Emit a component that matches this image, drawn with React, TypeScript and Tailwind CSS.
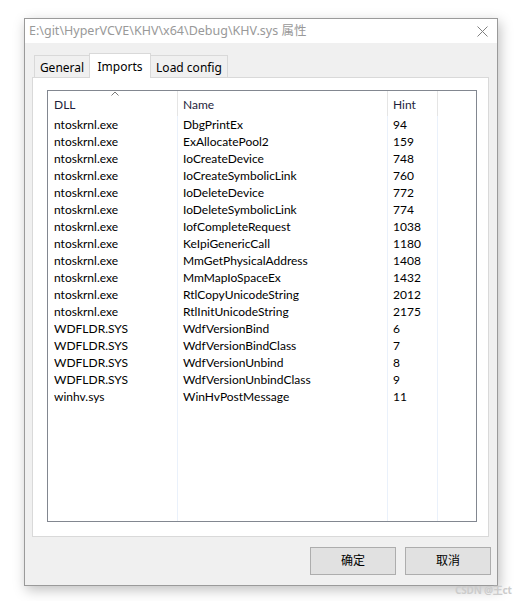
import { useState } from "react";

const ROWS: [string, string, string][] = [
  ["ntoskrnl.exe", "DbgPrintEx", "94"],
  ["ntoskrnl.exe", "ExAllocatePool2", "159"],
  ["ntoskrnl.exe", "IoCreateDevice", "748"],
  ["ntoskrnl.exe", "IoCreateSymbolicLink", "760"],
  ["ntoskrnl.exe", "IoDeleteDevice", "772"],
  ["ntoskrnl.exe", "IoDeleteSymbolicLink", "774"],
  ["ntoskrnl.exe", "IofCompleteRequest", "1038"],
  ["ntoskrnl.exe", "KeIpiGenericCall", "1180"],
  ["ntoskrnl.exe", "MmGetPhysicalAddress", "1408"],
  ["ntoskrnl.exe", "MmMapIoSpaceEx", "1432"],
  ["ntoskrnl.exe", "RtlCopyUnicodeString", "2012"],
  ["ntoskrnl.exe", "RtlInitUnicodeString", "2175"],
  ["WDFLDR.SYS", "WdfVersionBind", "6"],
  ["WDFLDR.SYS", "WdfVersionBindClass", "7"],
  ["WDFLDR.SYS", "WdfVersionUnbind", "8"],
  ["WDFLDR.SYS", "WdfVersionUnbindClass", "9"],
  ["winhv.sys", "WinHvPostMessage", "11"],
];

const TABS = [
  { label: "General", width: "w-[56px]" },
  { label: "Imports", width: "w-[62px]" },
  { label: "Load config", width: "w-[78px]" },
];

export default function App() {
  const [tab, setTab] = useState("Imports");

  return (
    <div className="relative w-[517px] h-[601px] bg-white pl-[24px] pt-[18px] text-[12px] text-black font-['Noto_Sans','Noto_Sans_CJK_SC',sans-serif]">
      {/* window */}
      <div className="w-[474px] h-[568px] border border-[#9a9a9a] bg-[#f0f0f0] flex flex-col shadow-[2px_4px_12px_rgba(0,0,0,0.25)]">
        {/* title bar */}
        <div className="h-[24px] bg-white flex items-center justify-between pl-[4px] pr-[9px] shrink-0">
          <span className="text-[#999999] text-[12.5px] leading-none">E:\git\HyperVCVE\KHV\x64\Debug\KHV.sys 属性</span>
          <svg width="11" height="11" viewBox="0 0 11 11" stroke="#808080" strokeWidth="1">
            <path d="M0.5 0.5 L10.5 10.5 M10.5 0.5 L0.5 10.5" />
          </svg>
        </div>

        {/* tabs */}
        <div className="flex items-end h-[34px] pl-[9px] shrink-0">
          {TABS.map((t) => {
            const active = t.label === tab;
            return (
              <button
                key={t.label}
                onClick={() => setTab(t.label)}
                className={
                  active
                    ? `relative z-10 ${t.width} h-[25px] -mb-px -mr-px flex justify-center items-start pt-[4px] bg-white border border-b-0 border-[#d9d9d9] text-[12px]`
                    : `${t.width} h-[22px] -mr-px flex justify-center items-start pt-[3px] bg-[#f0f0f0] border border-b-0 border-[#d9d9d9] text-[12px]`
                }
              >
                {t.label}
              </button>
            );
          })}
        </div>

        {/* tab panel */}
        <div className="ml-[7px] mr-[8px] h-[460px] bg-white border border-[#d9d9d9] pl-[14px] pr-[11px] pt-[12px] shrink-0">
          <div className="h-[432px] border border-[#828790] bg-white flex flex-col overflow-hidden font-['Lato','Noto_Sans',sans-serif]">
            {/* header */}
            <div className="flex h-[25px] shrink-0 text-[#1e1e3c]">
              <div className="relative w-[130px] border-r border-[#e5e5e5] pl-[6px] pt-[5px]">
                DLL
                <svg className="absolute left-[63px] top-[0px]" width="8" height="5" viewBox="0 0 8 5" fill="none" stroke="#7a7a7a" strokeWidth="1">
                  <path d="M0.5 4.5 L4 1 L7.5 4.5" />
                </svg>
              </div>
              <div className="w-[210px] border-r border-[#e5e5e5] pl-[5px] pt-[5px]">Name</div>
              <div className="w-[50px] border-r border-[#e5e5e5] pl-[5px] pt-[5px]">Hint</div>
            </div>
            {/* body */}
            <div className="flex flex-1">
              <div className="w-[130px] border-r border-[#eaf1fb]">
                {ROWS.map((r, i) => (
                  <div key={i} className="h-[17px] pl-[6px] leading-[17px] whitespace-nowrap">{r[0]}</div>
                ))}
              </div>
              <div className="w-[210px] border-r border-[#eaf1fb]">
                {ROWS.map((r, i) => (
                  <div key={i} className="h-[17px] pl-[5px] leading-[17px] whitespace-nowrap">{r[1]}</div>
                ))}
              </div>
              <div className="w-[50px] border-r border-[#eaf1fb]">
                {ROWS.map((r, i) => (
                  <div key={i} className="h-[17px] pl-[5px] leading-[17px]">{r[2]}</div>
                ))}
              </div>
            </div>
          </div>
        </div>

        {/* buttons */}
        <div className="flex justify-end gap-[9px] pr-[6px] pt-[10px]">
          <button className="w-[86px] h-[28px] bg-[#e1e1e1] border border-[#adadad] text-[12px]">确定</button>
          <button className="w-[86px] h-[28px] bg-[#e1e1e1] border border-[#adadad] text-[12px]">取消</button>
        </div>
      </div>

      <span className="absolute left-[455px] top-[583px] whitespace-nowrap text-[10px] tracking-[-0.2px] font-bold text-[#cccccc]">CSDN @王ct</span>
    </div>
  );
}
